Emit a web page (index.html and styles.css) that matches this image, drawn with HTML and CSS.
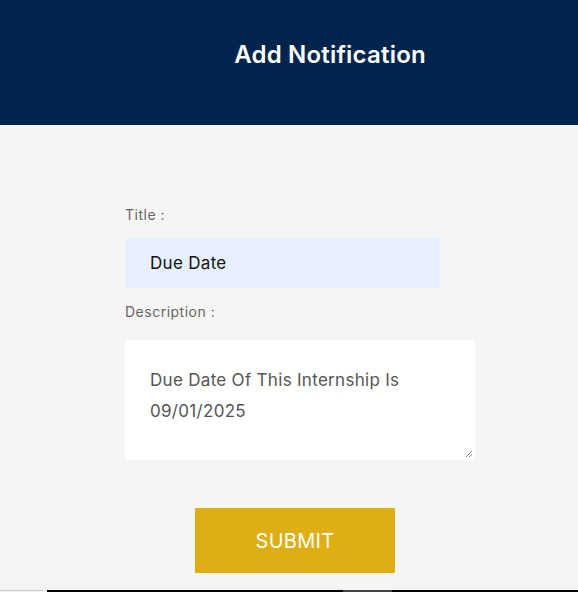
FILE: index.html
```html
<!DOCTYPE html>
<html>
<head>
<meta charset="utf-8">
<link rel="stylesheet" href="styles.css">
</head>
<body>
<header class="header">
  <h1 class="header-title">Add Notification</h1>
</header>
<main class="main">
  <form class="form">
    <label class="label">Title :</label>
    <div class="input">Due Date</div>
    <label class="label label-desc">Description :</label>
    <div class="textarea">
      <p class="textarea-text">Due Date Of This Internship Is<br>09/01/2025</p>
      <svg class="grip" width="8" height="8" viewBox="0 0 8 8"><path d="M7 1 L1 7 M7 4 L4 7" stroke="#888" stroke-width="1"/></svg>
    </div>
    <div class="actions">
      <button type="button" class="submit">SUBMIT</button>
    </div>
  </form>
</main>
<div class="bottom">
  <div class="bottom-left"></div>
  <div class="bottom-bar"><div class="bottom-thumb"></div></div>
</div>
</body>
</html>
```
FILE: styles.css
```css
html, body {
  margin: 0;
  padding: 0;
}
body {
  background: #f5f5f5;
  font-family: Inter, "Open Sans", sans-serif;
  width: 578px;
  height: 592px;
  overflow: hidden;
  position: relative;
}
.header {
  background: #00244b;
  height: 125px;
  display: flex;
  align-items: center;
  justify-content: center;
  padding-left: 82px;
  box-sizing: border-box;
}
.header-title {
  margin: 0;
  color: #fff;
  font-size: 24px;
  font-weight: 600;
  letter-spacing: 0.2px;
  position: relative;
  top: -8px;
}
.main {
  padding-top: 81px;
}
.form {
  margin-left: 125px;
  width: 350px;
  display: flex;
  flex-direction: column;
}
.label {
  font-size: 14px;
  color: #666;
  line-height: 18px;
  height: 18px;
  letter-spacing: 0.5px;
}
.input {
  margin-top: 14px;
  width: 315px;
  height: 50px;
  background: #e8f0fe;
  box-sizing: border-box;
  padding-left: 25px;
  display: flex;
  align-items: center;
  font-size: 17px;
  color: #111;
  letter-spacing: 0.3px;
}
.label-desc {
  margin-top: 15px;
}
.textarea {
  margin-top: 19px;
  width: 350px;
  height: 120px;
  background: #fff;
  box-sizing: border-box;
  padding: 25px 25px 0 25px;
  position: relative;
}
.textarea-text {
  margin: 0;
  font-size: 17px;
  line-height: 31px;
  color: #555;
  letter-spacing: 0.3px;
}
.grip {
  position: absolute;
  right: 2px;
  bottom: 2px;
}
.actions {
  margin-top: 48px;
  padding-left: 70px;
}
.submit {
  width: 200px;
  height: 65px;
  border: none;
  background: #dfae15;
  color: #fff;
  font-family: Inter, "Open Sans", sans-serif;
  font-size: 20px;
  letter-spacing: 0.3px;
}
.bottom {
  position: absolute;
  left: 0;
  right: 0;
  bottom: 0;
  height: 2px;
  display: flex;
}
.bottom-left {
  width: 43px;
  background: #c8c8c8;
  height: 1px;
}
.bottom-bar {
  margin-left: 4px;
  flex: 1;
  background: #000;
  position: relative;
}
.bottom-thumb {
  position: absolute;
  left: 296px;
  width: 49px;
  top: 0;
  bottom: 0;
  background: #444;
}
```
